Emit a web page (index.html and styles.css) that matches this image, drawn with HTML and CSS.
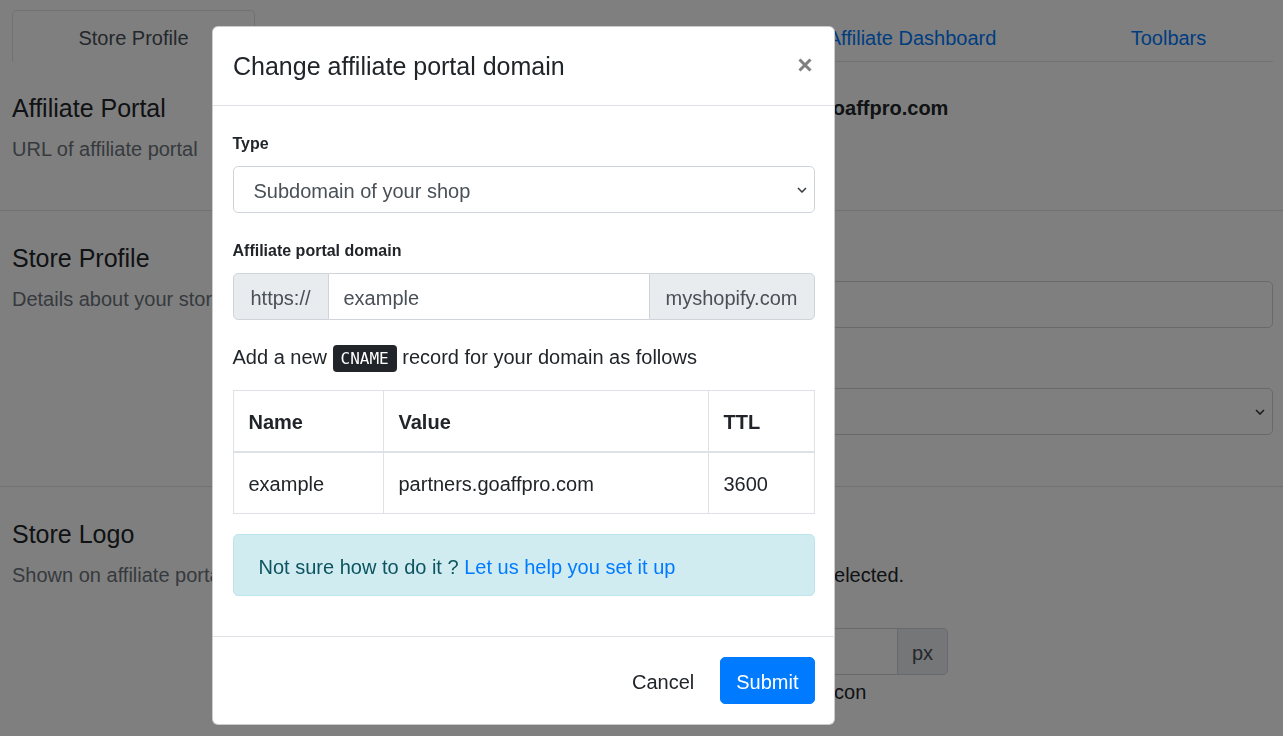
FILE: index.html
```html
<!DOCTYPE html>
<html lang="en">
<head>
<meta charset="utf-8">
<title>Store settings</title>
<link rel="stylesheet" href="styles.css">
</head>
<body>
<div class="page">
  <nav class="tabs">
    <a class="tab active">Store Profile</a>
    <a class="tab">Commissions</a>
    <a class="tab">Payouts</a>
    <a class="tab">Affiliate Dashboard</a>
    <a class="tab">Toolbars</a>
  </nav>

  <section class="sect sect-1">
    <div class="sect-info">
      <h5 class="sect-title">Affiliate Portal</h5>
      <p class="sect-desc">URL of affiliate portal</p>
    </div>
    <div class="sect-body">
      <div class="domain">https://example-store-affiliates.goaffpro.com</div>
    </div>
  </section>

  <section class="sect sect-2">
    <div class="sect-info">
      <h5 class="sect-title">Store Profile</h5>
      <p class="sect-desc">Details about your store</p>
    </div>
    <div class="sect-body">
      <label class="bg-label">Store name</label>
      <input class="bg-input bg-gap" type="text" value="">
      <label class="bg-label bg-label-2">Currency</label>
      <div class="bg-select-wrap">
        <select class="bg-select"><option></option></select>
        <svg class="bg-chev" width="10" height="6" viewBox="0 0 10 6"><polyline points="1,1 5,5 9,1" fill="none" stroke="#343a40" stroke-width="1.6"/></svg>
      </div>
    </div>
  </section>

  <section class="sect sect-3">
    <div class="sect-info">
      <h5 class="sect-title">Store Logo</h5>
      <p class="sect-desc">Shown on affiliate portal</p>
    </div>
    <div class="sect-body">
      <p class="bg-text bg-text-1">Upload logo</p>
      <p class="bg-text bg-text-2">Store name is shown if no logo is selected.</p>
      <div class="bg-group">
        <input class="bg-group-input" type="text" value="">
        <span class="bg-addon">px</span>
      </div>
      <p class="bg-text bg-help">Height of the logo beside the user icon</p>
    </div>
  </section>
</div>

<div class="backdrop"></div>

<div class="modal">
  <div class="modal-header">
    <h5 class="modal-title">Change affiliate portal domain</h5>
    <button class="close" type="button" aria-label="Close">
      <svg width="14" height="14" viewBox="0 0 14 14"><path d="M1.5 1.5 L12.5 12.5 M12.5 1.5 L1.5 12.5" stroke="#808080" stroke-width="3" fill="none"/></svg>
    </button>
  </div>
  <div class="modal-body">
    <div class="form-group group-type">
      <label class="form-label">Type</label>
      <div class="select-wrap">
        <select class="form-select"><option>Subdomain of your shop</option></select>
        <svg class="chev" width="10" height="6" viewBox="0 0 10 6"><polyline points="1,1 5,5 9,1" fill="none" stroke="#343a40" stroke-width="1.5"/></svg>
      </div>
    </div>
    <div class="form-group group-domain">
      <label class="form-label">Affiliate portal domain</label>
      <div class="input-group">
        <span class="addon addon-pre">https://</span>
        <input class="group-input" type="text" value="example">
        <span class="addon addon-post">myshopify.com</span>
      </div>
    </div>
    <p class="cname-line">Add a new <kbd class="kbd">CNAME</kbd> record for your domain as follows</p>
    <table class="dns">
      <colgroup><col class="c1"><col class="c2"><col class="c3"></colgroup>
      <thead>
        <tr><th>Name</th><th>Value</th><th>TTL</th></tr>
      </thead>
      <tbody>
        <tr><td>example</td><td>partners.goaffpro.com</td><td>3600</td></tr>
      </tbody>
    </table>
    <div class="alert">Not sure how to do it ? <a class="alert-link">Let us help you set it up</a></div>
  </div>
  <div class="modal-footer">
    <button class="btn btn-cancel" type="button">Cancel</button>
    <button class="btn btn-primary" type="button">Submit</button>
  </div>
</div>
</body>
</html>
```

FILE: styles.css
```css
* { box-sizing: border-box; }

html, body {
  margin: 0;
  height: 736px;
  overflow: hidden;
}

body {
  font-family: "Liberation Sans", Arial, sans-serif;
  font-size: 20px;
  line-height: 1.5;
  color: #212529;
  background: #fff;
}

/* ---------- background page ---------- */
.tabs {
  display: grid;
  grid-template-columns: 243px 252px 253px 304px 1fr;
  margin: 10px 10px 0 12px;
  border-bottom: 1px solid #dee2e6;
}

.tab {
  display: block;
  padding: 12px 20px 8px;
  border: 1px solid transparent;
  border-radius: 5px 5px 0 0;
  margin-bottom: -1px;
  text-align: center;
  line-height: 30px;
  color: #007bff;
  white-space: nowrap;
}

.tab.active {
  color: #495057;
  background: #fff;
  border-color: #dee2e6 #dee2e6 #fff;
}

.sect {
  display: grid;
  grid-template-columns: 513px 1fr;
  padding: 32px 10px 0 12px;
  border-bottom: 1px solid #dee2e6;
}

.sect-1 { padding-top: 31px; padding-bottom: 46px; }
.sect-2 { padding-bottom: 51px; }
.sect-3 { border-bottom: none; }

.sect-title {
  margin: 0 0 10px;
  font-size: 25px;
  line-height: 30px;
  font-weight: 400;
}

.sect-desc {
  margin: 0;
  line-height: 30px;
  padding-top: 1px;
  color: #6c757d;
}

.domain {
  font-weight: 700;
  line-height: 30px;
  white-space: nowrap;
}

.bg-label {
  display: block;
  line-height: 30px;
  margin-bottom: 8px;
}

.bg-label-2 { margin-bottom: 10px; }

.bg-input,
.bg-select {
  display: block;
  width: 100%;
  height: 47px;
  border: 1px solid #ced4da;
  border-radius: 5px;
  background: #fff;
  font: inherit;
  color: #495057;
  padding: 0 15px;
  appearance: none;
  -webkit-appearance: none;
}

.bg-gap { margin-bottom: 20px; }

.bg-select-wrap { position: relative; }

.bg-chev {
  position: absolute;
  right: 8px;
  top: 21px;
}

.bg-text {
  margin: 0;
  line-height: 30px;
  white-space: nowrap;
}

.bg-text-1 { margin-bottom: 11px; }
.bg-text-2 { margin-bottom: 38px; }
.bg-help { margin-top: 2px; }

.bg-group {
  display: flex;
  width: 423px;
  height: 47px;
}

.bg-group-input {
  flex: 1;
  min-width: 0;
  border: 1px solid #ced4da;
  border-right: none;
  border-radius: 5px 0 0 5px;
  font: inherit;
  padding: 0 15px;
}

.bg-addon {
  display: flex;
  align-items: center;
  justify-content: center;
  width: 51px;
  padding-top: 2px;
  border: 1px solid #ced4da;
  border-radius: 0 5px 5px 0;
  background: #e9ecef;
  color: #495057;
}

/* ---------- backdrop ---------- */
.backdrop {
  position: fixed;
  inset: 0;
  background: rgba(0, 0, 0, 0.5);
}

/* ---------- modal ---------- */
.modal {
  position: absolute;
  left: 212px;
  top: 26px;
  width: 623px;
  background: #fff;
  border: 1px solid rgba(0, 0, 0, 0.2);
  border-radius: 6px;
  overflow: hidden;
}

.modal-header {
  display: flex;
  align-items: flex-start;
  padding: 21px 20px 19px;
  border-bottom: 1px solid #dee2e6;
}

.modal-title {
  margin: 0;
  font-size: 25px;
  line-height: 37.5px;
  font-weight: 400;
}

.close {
  margin: 10px 2px 0 auto;
  padding: 0;
  border: 0;
  background: transparent;
  width: 14px;
  height: 14px;
  display: flex;
}

.modal-body {
  padding: 26px 19.5px 20px 19.5px;
}

.form-label {
  display: block;
  font-size: 16px;
  font-weight: 700;
  line-height: 24px;
  margin-bottom: 10px;
}

.group-type { margin-bottom: 26px; }
.group-domain { margin-bottom: 20px; }

.select-wrap { position: relative; }

.form-select {
  display: block;
  width: 100%;
  height: 47px;
  padding: 3px 40px 0 20px;
  border: 1px solid #ced4da;
  border-radius: 5px;
  background: #fff;
  font: inherit;
  color: #495057;
  appearance: none;
  -webkit-appearance: none;
}

.chev {
  position: absolute;
  right: 8px;
  top: 21px;
}

.input-group {
  display: flex;
  height: 47px;
}

.addon {
  display: flex;
  align-items: center;
  justify-content: center;
  padding-top: 3px;
  background: #e9ecef;
  border: 1px solid #ced4da;
  color: #495057;
  white-space: nowrap;
}

.addon-pre {
  width: 96px;
  border-radius: 5px 0 0 5px;
}

.addon-post {
  width: 166px;
  border-radius: 0 5px 5px 0;
}

.group-input {
  flex: 1;
  min-width: 0;
  border-top: 1px solid #ced4da;
  border-bottom: 1px solid #ced4da;
  border-left: none;
  border-right: none;
  padding: 3px 15px 0;
  font: inherit;
  color: #495057;
  background: #fff;
}

.cname-line {
  margin: 0 0 18px;
  padding-top: 2px;
  line-height: 30px;
}

.kbd {
  font-family: "DejaVu Sans Mono", "Liberation Mono", monospace;
  font-size: 16px;
  line-height: 20px;
  padding: 4px 8px;
  background: #212529;
  color: #fff;
  border-radius: 4px;
}

.dns {
  width: 100%;
  border-collapse: collapse;
  table-layout: fixed;
  margin-bottom: 20px;
}

.dns .c1 { width: 150px; }
.dns .c2 { width: 325px; }

.dns th,
.dns td {
  border: 1px solid #dee2e6;
  padding: 16px 15px 14px;
  line-height: 30px;
  text-align: left;
  white-space: nowrap;
}

.dns th {
  font-weight: 700;
  border-bottom-width: 2px;
}

.alert {
  padding: 17px 25px 13px;
  margin-bottom: 20px;
  border: 1px solid #bee5eb;
  border-radius: 5px;
  background: #d1ecf1;
  color: #0c5460;
  line-height: 30px;
}

.alert-link {
  color: #007bff;
}

.modal-footer {
  display: flex;
  justify-content: flex-end;
  align-items: center;
  padding: 15px 14.5px;
  border-top: 1px solid #dee2e6;
}

.btn {
  margin: 5px;
  height: 47px;
  padding: 9px 15px 6px;
  border: 1px solid transparent;
  border-radius: 5px;
  font: inherit;
  line-height: 30px;
  cursor: pointer;
}

.btn-cancel {
  background: transparent;
  color: #212529;
}

.btn-primary {
  background: #007bff;
  border-color: #007bff;
  color: #fff;
}
```
